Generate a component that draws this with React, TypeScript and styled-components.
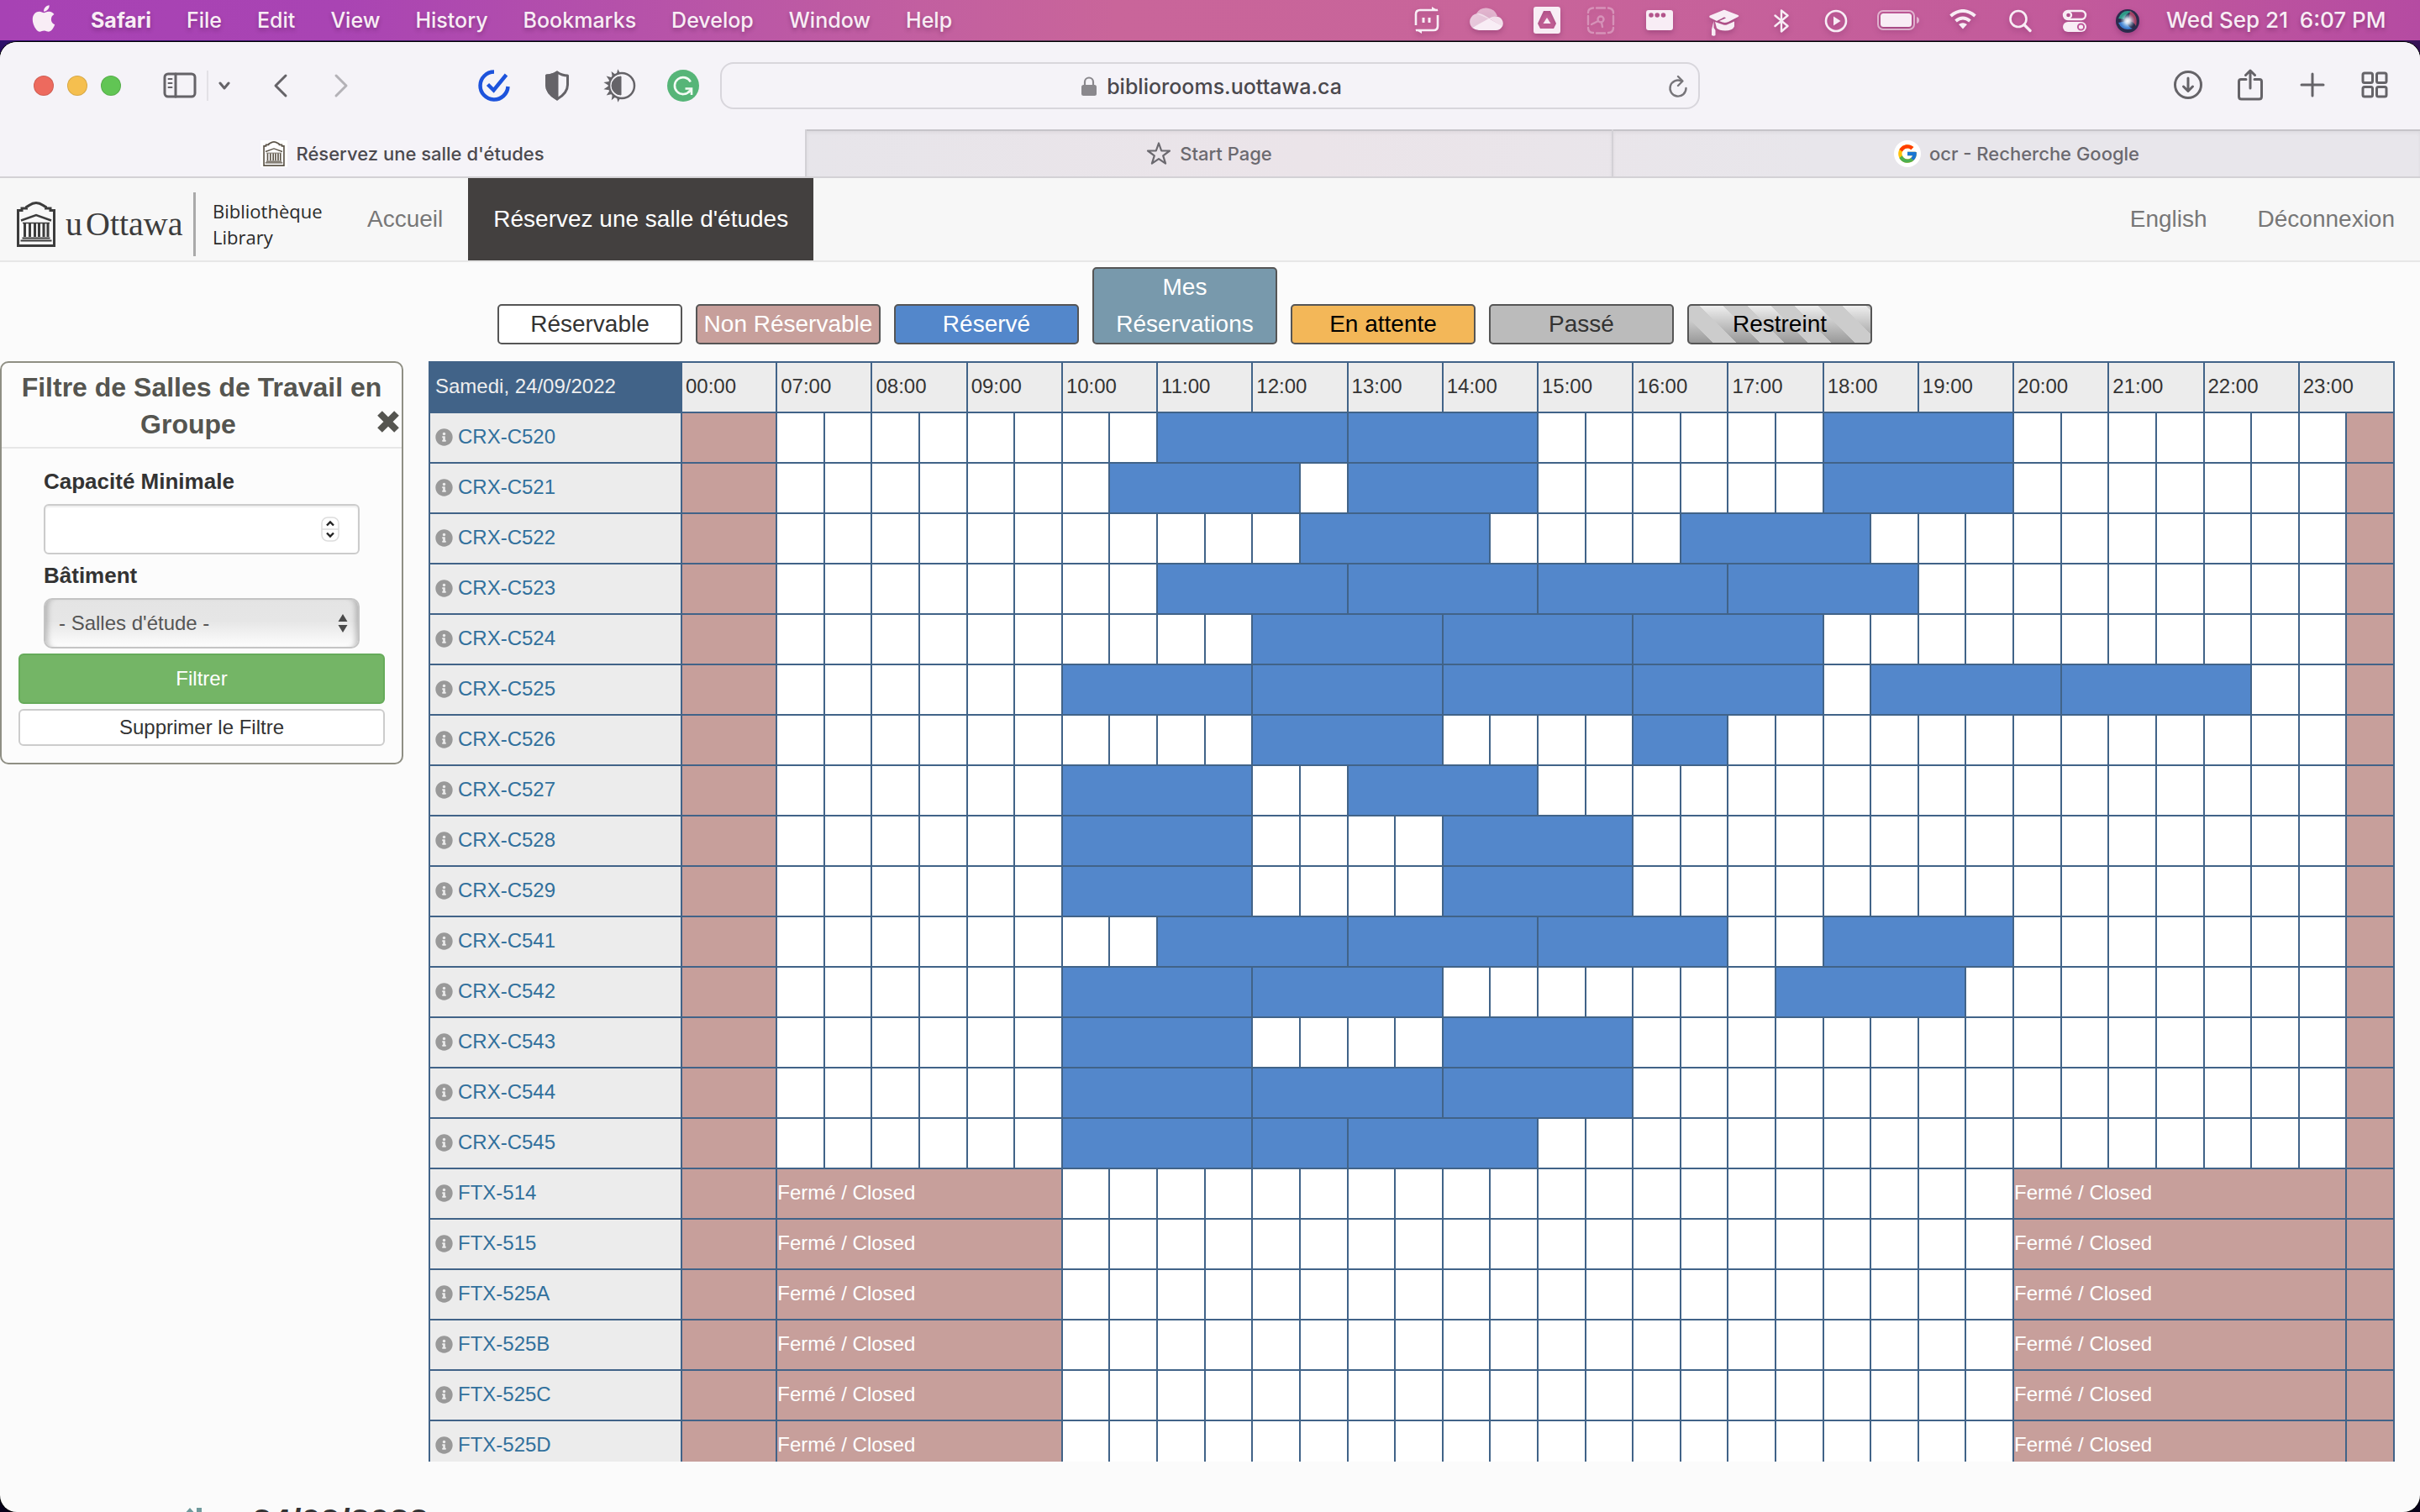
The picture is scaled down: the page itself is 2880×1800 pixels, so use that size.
import React from "react";
import styled, { createGlobalStyle, css } from "styled-components";
import { FaApple, FaInfoCircle } from "react-icons/fa";
import { FcGoogle } from "react-icons/fc";

const UI = `Inter, "Liberation Sans", sans-serif`;
const WEB = `"Liberation Sans", Arial, sans-serif`;
const LINE = "#416388";
const PINK = "#c79f9b";
const BLUE = "#5387cb";

const Global = createGlobalStyle`
  *, *::before, *::after { box-sizing: border-box; }
  body { margin: 0; background: #0b0420; font-family: ${WEB}; color: #333; }
  button, input, select { font: inherit; color: inherit; margin: 0; }
  button { background: none; border: 0; padding: 0; }
  a { color: inherit; text-decoration: none; }
  svg { display: block; flex: none; }
`;

/* ---------- desktop ---------- */

const Desktop = styled.div`
  height: 100vh;
  display: flex;
  flex-direction: column;
  overflow: hidden;
  background:
    linear-gradient(to bottom, transparent 0, #07021a 120px),
    linear-gradient(to right, #4b1aa6, #8a5a78 45%, #8a4c7a 75%, #5a1f86);
`;

const MenuBar = styled.header`
  flex: none;
  height: 48px;
  padding: 0 38px;
  display: flex;
  align-items: center;
  justify-content: space-between;
  font: 500 25px/48px ${UI};
  color: #f8edf5;
  text-shadow: 0 3px 5px rgba(60, 0, 50, 0.3);
  background: linear-gradient(to right, #a742b4 0, #a944b3 14%, #c25fa0 38%, #c9659a 46%, #c8649a 64%, #c25a9b 86%, #b54ba2 100%);
`;

const Menus = styled.nav`
  display: flex;
  align-items: center;
  gap: 42px;
`;

const MenuItem = styled.button<{ $bold?: boolean }>`
  height: 48px;
  font-weight: ${(p) => (p.$bold ? 700 : 500)};
  text-shadow: inherit;
`;

const AppleMark = styled(FaApple)`
  width: 28px;
  height: 36px;
  margin-top: -4px;
`;

const Status = styled.div`
  display: flex;
  align-items: center;
  gap: 28px;
  svg { filter: drop-shadow(0 3px 3px rgba(60, 0, 50, 0.25)); }
`;

const Clock = styled.time`
  min-width: 264px;
  font-size: 26px;
  white-space: pre;
`;

/* ---------- browser chrome ---------- */

const Window = styled.div`
  flex: 1;
  min-height: 0;
  margin-top: 2px;
  display: flex;
  flex-direction: column;
  overflow: hidden;
  border-radius: 20px;
  background: #fbfbfb;
  box-shadow: 0 0 0 1px #000;
`;

const Toolbar = styled.div`
  flex: none;
  height: 104px;
  display: grid;
  grid-template-columns: 1fr 1166px 1fr;
  align-items: center;
  background: #f5f3f8;
  color: #656368;
  font-family: ${UI};
`;

const ToolSide = styled.div<{ $end?: boolean }>`
  display: flex;
  align-items: center;
  ${(p) =>
    p.$end
      ? css`justify-content: flex-end; gap: 34px; padding-right: 34px;`
      : css`justify-content: space-between; padding: 0 24px 0 40px;`}
`;

const Group = styled.div<{ $gap: number }>`
  display: flex;
  align-items: center;
  gap: ${(p) => p.$gap}px;
`;

const Light = styled.button<{ $c: string }>`
  width: 24px;
  height: 24px;
  border-radius: 50%;
  background: ${(p) => p.$c};
  border: 1px solid rgba(0, 0, 0, 0.12);
`;

const Rule = styled.span`
  width: 2px;
  height: 36px;
  background: #e3e1e6;
`;

const Address = styled.form`
  height: 56px;
  padding: 2px 12px 0 16px;
  display: grid;
  grid-template-columns: 1fr auto 1fr;
  align-items: center;
  border: 2px solid #d8d6dc;
  border-radius: 16px;
  color: #77757a;
`;

const Host = styled.label`
  grid-column: 2;
  display: flex;
  align-items: center;
  gap: 12px;
`;

const HostInput = styled.input`
  field-sizing: content;
  border: 0;
  padding: 0;
  outline: 0;
  background: none;
  font: 500 25px/40px ${UI};
  color: #4a484d;
`;

const Reload = styled.button`
  justify-self: end;
`;

const Tabs = styled.div`
  flex: none;
  height: 58px;
  display: grid;
  grid-template-columns: repeat(3, 1fr);
  border-bottom: 2px solid #d3d1d5;
  background: linear-gradient(to right, #e7e5ea 33%, #ebe4e9 54%, #e8e6eb 75%);
`;

const Tab = styled.button<{ $active?: boolean }>`
  padding-top: 2px;
  display: flex;
  align-items: center;
  justify-content: center;
  gap: 10px;
  font: 500 22px/32px ${UI};
  color: ${(p) => (p.$active ? "#4c4a4f" : "#6b696f")};
  border-right: 2px solid #d3d1d6;
  ${(p) =>
    p.$active
      ? css`background: #f5f3f8;`
      : css`box-shadow: inset 0 2px 0 #c6c4c9, inset 0 4px 4px rgba(0, 0, 0, 0.05);`}
  &:last-child { border-right: 0; }
`;

const Favicon = styled.span<{ $round?: boolean }>`
  width: 32px;
  height: 32px;
  display: grid;
  place-items: center;
  background: #fff;
  color: #5e564a;
  border-radius: ${(p) => (p.$round ? "50%" : "0")};
`;

/* ---------- site navigation ---------- */

const SiteNav = styled.nav`
  flex: none;
  height: 100px;
  display: flex;
  background: #f7f7f7;
  border-bottom: 2px solid #e7e7e7;
  font-size: 28px;
  line-height: 40px;
  color: #777;
`;

const Brand = styled.a`
  display: flex;
  align-items: center;
  padding: 12px 20px 0 20px;
  color: #3c3c3c;
`;

const Wordmark = styled.span`
  display: flex;
  gap: 4px;
  width: 152px;
  padding-left: 12px;
  font: 40px/52px "Liberation Serif", serif;
`;

const BrandRule = styled.span`
  width: 3px;
  height: 76px;
  margin: 0 20px 0 12px;
  background: #aaa;
`;

const Unit = styled.span`
  width: 134px;
  font: 500 22px/31px "Open Sans", sans-serif;
  color: #2a2a2a;
`;

const NavLink = styled.a<{ $on?: boolean }>`
  display: flex;
  align-items: center;
  padding: 0 30px;
  ${(p) => p.$on && css`background: #43403f; color: #fff;`}
`;

const Spacer = styled.span`
  flex: 1;
`;

/* ---------- legend ---------- */

const Legend = styled.ul`
  flex: none;
  list-style: none;
  margin: 0;
  padding: 6px 60px 20px 0;
  display: flex;
  justify-content: center;
  align-items: flex-end;
  gap: 16px;
`;

const Key = styled.li<{ $bg: string; $fg: string }>`
  width: 220px;
  padding: 0 6px;
  text-align: center;
  font-size: 28px;
  line-height: 44px;
  border: 2px solid #555;
  border-radius: 5px;
  white-space: pre-line;
  background: ${(p) => p.$bg};
  color: ${(p) => p.$fg};
`;

/* ---------- body ---------- */

const Body = styled.main`
  flex: 1;
  min-height: 0;
  display: flex;
  align-items: flex-start;
  gap: 30px;
  padding-right: 30px;
`;

const Panel = styled.form`
  flex: none;
  width: 480px;
  border: 2px solid #8f8f84;
  border-radius: 10px;
  background: #fcfcfc;
  padding-bottom: 20px;
`;

const PanelTitle = styled.div`
  padding: 7px 2px 5px;
  border-bottom: 2px solid #e7e7e7;
  display: grid;
  grid-template-columns: 1fr 28px;
`;

const Title = styled.h2`
  grid-area: 1 / 1 / 2 / 3;
  margin: 0;
  text-align: center;
  font: bold 32px/44px ${WEB};
  color: #555550;
`;

const TitleTail = styled.span`
  display: block;
  padding-right: 32px;
`;

const Close = styled.button`
  grid-area: 1 / 2 / 2 / 3;
  align-self: end;
  height: 50px;
  color: #555550;
`;

const Fields = styled.div`
  padding: 20px 50px 0;
`;

const Label = styled.label`
  display: block;
  font: bold 26px/38px ${WEB};
  padding: 0 0 8px;
  div + & { padding-top: 6px; }
`;

const Field = styled.div`
  position: relative;
`;

const control = css`
  display: block;
  width: 100%;
  height: 60px;
  border: 2px solid #ccc;
  font: 24px/40px ${WEB};
  outline: 0;
`;

const NumberInput = styled.input`
  ${control}
  border-radius: 6px;
  padding: 0 50px 0 16px;
  background: #fff;
  box-shadow: inset 0 2px 2px rgba(0, 0, 0, 0.07);
  appearance: textfield;
`;

const Select = styled.select`
  ${control}
  border-color: #c4c4c4;
  border-radius: 10px;
  padding: 0 16px;
  color: #555;
  appearance: none;
  background: linear-gradient(to bottom, #e4e4e4, #e6e6e6 45%, #fdfdfd);
  box-shadow: inset 8px 0 6px -5px rgba(0, 0, 0, 0.22), inset -8px 0 6px -5px rgba(0, 0, 0, 0.22);
`;

const Arrows = styled.span<{ $right: number }>`
  position: absolute;
  right: ${(p) => p.$right}px;
  top: 0;
  bottom: 0;
  display: flex;
  align-items: center;
  pointer-events: none;
`;

const Actions = styled.div`
  display: flex;
  flex-direction: column;
  gap: 6px;
  padding: 6px 20px 0;
  font-size: 24px;
`;

const Submit = styled.button`
  height: 60px;
  border: 2px solid #66ab5a;
  border-radius: 6px;
  background: #74b566;
  color: #fff;
`;

const Reset = styled.button`
  height: 44px;
  border: 2px solid #ccc;
  border-radius: 6px;
  background: #fff;
`;

const TableClip = styled.div`
  flex: 1;
  min-width: 0;
  align-self: stretch;
  overflow: hidden;
`;

const Table = styled.table`
  width: 100%;
  table-layout: fixed;
  border-collapse: collapse;
  font-size: 24px;
  line-height: 32px;
  th, td {
    height: 60px;
    border: 2px solid ${LINE};
    font-weight: 400;
    text-align: left;
    white-space: nowrap;
  }
`;

const RoomCol = styled.col`
  width: 300px;
`;

const DateHead = styled.th`
  padding: 0 6px 2px;
  background: ${LINE};
  color: #eee;
`;

const HourHead = styled.th`
  padding: 0 4px 2px;
  background: #ececec;
`;

const RoomCell = styled.th`
  padding: 0 6px 2px;
  background: #ececec;
`;

const RoomLink = styled.a`
  display: flex;
  align-items: center;
  gap: 6px;
  color: #31709c;
`;

const Info = styled(FaInfoCircle)`
  width: 21px;
  height: 21px;
  color: #999;
`;

const Slot = styled.td<{ $kind: Kind }>`
  padding: 0 0 2px;
  color: #fff;
  background: ${(p) => ({ free: "#fff", closed: PINK, booked: BLUE })[p.$kind]};
`;

const NextDay = styled.section`
  flex: none;
  height: 60px;
  padding: 51px 0 0 218px;
  display: flex;
  align-items: flex-start;
  gap: 58px;
  overflow: hidden;
`;

const NextTitle = styled.h3`
  margin: 0;
  font: bold 42px/42px ${WEB};
`;

/* ---------- icons ---------- */

type IconProps = { w: number; h: number; children: React.ReactNode; sw?: number };
const Icon = ({ w, h, children, sw = 3 }: IconProps) => (
  <svg width={w} height={h} viewBox={`0 0 ${w} ${h}`} fill="none" stroke="currentColor" strokeWidth={sw} strokeLinecap="round" strokeLinejoin="round" aria-hidden="true">
    {children}
  </svg>
);

const Building = ({ w, h }: { w: number; h: number }) => (
  <svg width={w} height={h} viewBox="0 0 46 54" fill="none" stroke="currentColor" strokeWidth="3" aria-hidden="true">
    <path d="M1.500 52.500V10.500H6V8h5.500V6.500C15 5 17 1.500 23 1.500S31 5 34.500 6.500V8H40v2.500h4.500v42z" />
    <path d="M5 22.500 23 16l18 6.500" strokeWidth="2.400" />
    <path d="M7 25.500h32" strokeWidth="1.500" />
    <path d="M9.500 26v16M15.500 26v16M21.500 26v16M26.500 26v16M32 26v16M37 26v16" strokeWidth="3" />
    <path d="M6.500 43.500h33M4.500 46.500h37" strokeWidth="2" />
  </svg>
);

const StatusIcons = () => (
  <>
    <Icon w={34} h={48} sw={2.6}>
      <path d="M5 30V17q0-5 5-5h21M31 18v13q0 5-5 5H5" strokeLinecap="butt" />
      <path d="M24 8l8 5h-8zM12 40l-8-5h8z" fill="currentColor" stroke="none" />
      <path d="M14 21v6M21 21v6" strokeWidth="3" strokeLinecap="butt" />
    </Icon>
    <Icon w={54} h={48}>
      <g fill="currentColor" stroke="none">
        <path d="M15 16a14 14 0 0 1 25 3q-6 1-9 4L15 16z" opacity=".6" />
        <path d="M8 30a10 10 0 0 1 10-14q4 0 14 7L10 33z" opacity=".75" />
        <path d="M10 33q4 3 8 3h20a8.500 8.500 0 0 0 8-5L30 22z" />
        <path d="M30 22q4-3 9-2.500a8.500 8.500 0 0 1 7 12z" opacity=".9" />
      </g>
    </Icon>
    <Icon w={34} h={48}>
      <path fillRule="evenodd" fill="currentColor" stroke="none" d="M4 8h26q3 0 3 3v26q0 3-3 3H4q-3 0-3-3V11q0-3 3-3zM13 13 6 28l3 6h16l3-6-7-15z" />
      <path d="M17 21l-4.500 7h9z" fill="currentColor" stroke="none" />
    </Icon>
    <Icon w={40} h={48} sw={2.4}>
      <g opacity=".35">
        <path d="M14 9.500h10M4 15q0-5 6-5.500M28 9.500q6 .5 6 6M4 33q0 6 6 6M34 33q0 6-6 6M4 19v10M34 19v10M14 39.500h10" />
        <circle cx="19" cy="23" r="3.500" />
        <path d="M16 25l-8 4M20 27l1 5" />
      </g>
    </Icon>
    <Icon w={50} h={48}>
      <path fillRule="evenodd" fill="currentColor" stroke="none" d="M8 12h26q3 0 3 3v18q0 3-3 3H8q-3 0-3-3V15q0-3 3-3zM11 15.200a2.800 2.800 0 1 0 0 5.600 2.800 2.800 0 0 0 0-5.600zM18.200 15.200a2.800 2.800 0 1 0 0 5.600 2.800 2.800 0 0 0 0-5.600zM25.500 15.200a2.800 2.800 0 1 0 0 5.600 2.800 2.800 0 0 0 0-5.600z" />
    </Icon>
    <Icon w={40} h={48}>
      <g fill="currentColor" stroke="none">
        <path d="M19 12q1-.5 2 0l15.500 6q1.500 1 0 2L25 26q-4 1.500-7 .5l-4-1.500 8-3.500q-2-2-4 0L11 25l-8-4q-1.500-1.500 0-2.500z" />
        <path d="M9 26l10 3.500q2 .5 4 0l9-4v6q-2 5-11 5-7 0-10-3z" />
        <path d="M7.500 25v8l2 3v6q-2 1.500-4.500 0V35z" />
      </g>
    </Icon>
    <Icon w={40} h={48} sw={2.4}>
      <path d="M12.500 18.500 27.500 31 20 37.500V12.500L27.500 18.500 12.500 31" />
    </Icon>
    <Icon w={34} h={48} sw={2.600}>
      <circle cx="17" cy="25" r="12" />
      <path d="M14 19.500v11l8.500-5.500z" fill="currentColor" stroke="none" />
    </Icon>
    <Icon w={58} h={48} sw={2}>
      <rect x="5" y="13" width="43" height="22" rx="6" opacity=".6" />
      <rect x="8" y="16" width="37" height="16" rx="3.500" fill="currentColor" stroke="none" />
      <path d="M51 20q3 1 3 4t-3 4z" fill="currentColor" stroke="none" opacity=".6" />
    </Icon>
    <Icon w={40} h={48} sw={4}>
      <path d="M5.500 19q14.500-12 29 0M11.500 25q8.500-7 17 0" strokeLinecap="butt" />
      <path d="M20 34.500 15 29q5-3.500 10 0z" fill="currentColor" stroke="none" />
    </Icon>
    <Icon w={40} h={48} sw={2.600}>
      <circle cx="18" cy="22.500" r="9.500" />
      <path d="M25 29.500 32 36.500" strokeWidth="3.400" />
    </Icon>
    <Icon w={34} h={48} sw={2.400}>
      <rect x="4" y="13" width="26" height="10" rx="5" />
      <circle cx="9.500" cy="18" r="3.500" />
      <rect x="3" y="26" width="28" height="12" rx="6" fill="currentColor" stroke="none" />
      <circle cx="24.500" cy="32" r="3.600" stroke="#c0589b" strokeWidth="2" />
    </Icon>
    <svg width="36" height="48" viewBox="0 0 36 48" aria-hidden="true">
      <defs>
        <radialGradient id="siri">
          <stop offset="0" stopColor="#fff" />
          <stop offset=".35" stopColor="#e6f2fb" stopOpacity=".85" />
          <stop offset="1" stopColor="#9fd0ee" stopOpacity="0" />
        </radialGradient>
      </defs>
      <circle cx="18" cy="25" r="14" fill="#2b2b4c" />
      <path d="M7 22q5-12 16-8-8 2-9 9z" fill="#2fae93" opacity=".85" />
      <path d="M21 13q10 5 7 18-3-6-9-6z" fill="#c24a6c" opacity=".8" />
      <path d="M7 27q5 11 17 7-6-2-7-9z" fill="#3f8de8" opacity=".85" />
      <circle cx="18" cy="25" r="9" fill="url(#siri)" />
    </svg>
  </>
);

const sunRays = Array.from({ length: 8 }, (_, i) => {
  const a = ((98 + i * 23.500) * Math.PI) / 180;
  const at = (r: number, d: number) => `${20 + r * Math.cos(a + d)} ${20 - r * Math.sin(a + d)}`;
  return `M${at(14, -0.17)}L${at(20, 0)}L${at(14, 0.17)}z`;
}).join("");

/* ---------- schedule data ---------- */

type Kind = "free" | "closed" | "booked";
type Span = [from: number, to: number];
const OPEN = 7;
const LAST = 23.5;

const bookings: Record<string, Span[]> = {
  "CRX-C520": [[11, 13], [13, 15], [18, 20]],
  "CRX-C521": [[10.5, 12.5], [13, 15], [18, 20]],
  "CRX-C522": [[12.5, 14.5], [16.5, 18.5]],
  "CRX-C523": [[11, 13], [13, 15], [15, 17], [17, 19]],
  "CRX-C524": [[12, 14], [14, 16], [16, 18]],
  "CRX-C525": [[10, 12], [12, 14], [14, 16], [16, 18], [18.5, 20.5], [20.5, 22.5]],
  "CRX-C526": [[12, 14], [16, 17]],
  "CRX-C527": [[10, 12], [13, 15]],
  "CRX-C528": [[10, 12], [14, 16]],
  "CRX-C529": [[10, 12], [14, 16]],
  "CRX-C541": [[11, 13], [13, 15], [15, 17], [18, 20]],
  "CRX-C542": [[10, 12], [12, 14], [17.5, 19.5]],
  "CRX-C543": [[10, 12], [14, 16]],
  "CRX-C544": [[10, 12], [12, 14], [14, 16]],
  "CRX-C545": [[10, 12], [12, 13], [13, 15]],
};
const closedRooms = ["FTX-514", "FTX-515", "FTX-525A", "FTX-525B", "FTX-525C", "FTX-525D"];
const closedSpans: Span[] = [[7, 10], [20, 23.5]];
const hours = [0, ...Array.from({ length: 17 }, (_, i) => OPEN + i)];

const Row = ({ room, spans, kind }: { room: string; spans: Span[]; kind: Kind }) => {
  const cells: React.ReactNode[] = [];
  for (let t = OPEN; t < LAST; ) {
    const span = spans.find(([from]) => from === t);
    const end = span ? span[1] : t + 0.5;
    cells.push(
      <Slot key={t} colSpan={(end - t) * 2} $kind={span ? kind : "free"}>
        {span && kind === "closed" ? "Fermé / Closed" : null}
      </Slot>
    );
    t = end;
  }
  return (
    <tr>
      <RoomCell scope="row">
        <RoomLink href="#">
          <Info />
          {room}
        </RoomLink>
      </RoomCell>
      <Slot colSpan={2} $kind="closed" />
      {cells}
      <Slot $kind="closed" />
    </tr>
  );
};

const legend = [
  { text: "Réservable", bg: "#fff", fg: "#333" },
  { text: "Non Réservable", bg: PINK, fg: "#fff" },
  { text: "Réservé", bg: BLUE, fg: "#fff" },
  { text: "Mes\nRéservations", bg: "#7899ac", fg: "#fff" },
  { text: "En attente", bg: "#f3b758", fg: "#000" },
  { text: "Passé", bg: "#bbb", fg: "#333" },
  {
    text: "Restreint",
    bg: "repeating-linear-gradient(45deg, transparent 0 20px, #ccc 20px 40px), linear-gradient(to bottom, #eee, #999)",
    fg: "#000",
  },
];

export default function App() {
  return (
    <Desktop>
      <Global />
      <MenuBar>
        <Menus>
          <AppleMark aria-hidden="true" />
          <MenuItem $bold>Safari</MenuItem>
          {["File", "Edit", "View", "History", "Bookmarks", "Develop", "Window", "Help"].map((m) => (
            <MenuItem key={m}>{m}</MenuItem>
          ))}
        </Menus>
        <Status>
          <StatusIcons />
          <Clock>{"Wed Sep 21  6:07 PM"}</Clock>
        </Status>
      </MenuBar>

      <Window>
        <Toolbar>
          <ToolSide>
            <Group $gap={50}>
              <Group $gap={16}>
                <Light $c="#ed6a5e" aria-label="Close" />
                <Light $c="#f5bf4f" aria-label="Minimize" />
                <Light $c="#61c554" aria-label="Zoom" />
              </Group>
              <Group $gap={12}>
                <button aria-label="Sidebar">
                  <Icon w={40} h={32}>
                    <rect x="2" y="2" width="36" height="27" rx="4" />
                    <path d="M15 2v27" />
                    <path d="M6.500 8h4M6.500 13h4M6.500 18h4" strokeWidth="2" />
                  </Icon>
                </button>
                <Rule />
                <button aria-label="Tab groups">
                  <Icon w={14} h={12}><path d="M2 3l5 6 5-6" /></Icon>
                </button>
              </Group>
              <Group $gap={52}>
                <button aria-label="Back">
                  <Icon w={20} h={30}><path d="M16 3 4 15l12 12" /></Icon>
                </button>
                <button aria-label="Forward">
                  <Icon w={20} h={30}><path d="M4 3l12 12L4 27" opacity=".45" /></Icon>
                </button>
              </Group>
            </Group>
            <Group $gap={35}>
              <button aria-label="Tasks">
                <svg width="40" height="40" viewBox="0 0 40 40" fill="none" stroke="#1d53dc" strokeWidth="4.500">
                  <path d="M20 3.500A16.500 16.500 0 1 0 36.500 21" />
                  <path d="M12.500 18.500l7 7L34.500 7" />
                </svg>
              </button>
              <button aria-label="Privacy">
                <Icon w={40} h={40}>
                  <path d="M20 4q6 4 12.500 4v11q0 10-12.500 17Q7.500 29 7.500 19V8Q14 8 20 4z" />
                  <path d="M20 4v32Q7.500 29 7.500 19V8Q14 8 20 4z" fill="currentColor" />
                </Icon>
              </button>
              <button aria-label="Dark mode">
                <svg width="40" height="40" viewBox="0 0 40 40">
                  <path d={sunRays} fill="#656368" />
                  <circle cx="22" cy="20" r="15" fill="#f5f3f8" stroke="#656368" strokeWidth="2.500" />
                  <path d="M21 9a11 11 0 0 0 0 22z" fill="#656368" stroke="#656368" />
                </svg>
              </button>
              <button aria-label="Grammar">
                <svg width="40" height="40" viewBox="0 0 40 40" fill="none" stroke="#f3fbf5" strokeWidth="2.600">
                  <circle cx="20" cy="20" r="19" fill="#56b578" stroke="none" />
                  <path d="M28.800 15.500A10 10 0 1 0 28 26" />
                  <path d="M22.500 23.500H30v7.500M30 24l-4 4.500" strokeWidth="2.600" />
                </svg>
              </button>
            </Group>
          </ToolSide>
          <Address>
            <Host>
              <svg width="18" height="24" viewBox="0 0 18 24" role="img" aria-label="Secure">
                <rect x="0" y="10" width="18" height="13" rx="2.500" fill="#8a888d" />
                <path d="M4 11V6.500a5 5 0 0 1 10 0V11" fill="none" stroke="#8a888d" strokeWidth="2.200" />
              </svg>
              <HostInput type="text" defaultValue="bibliorooms.uottawa.ca" aria-label="Address" />
            </Host>
            <Reload type="button" aria-label="Reload">
              <Icon w={24} h={30} sw={2.400}>
                <path d="M16 8.500A9.500 9.500 0 1 0 21.500 17" />
                <path d="M12 3l5.500 5.500L12 14" />
              </Icon>
            </Reload>
          </Address>
          <ToolSide $end>
            <button aria-label="Downloads">
              <Icon w={40} h={40}><circle cx="20" cy="19" r="15.500" /><path d="M20 11v15M14.500 21l5.500 5.500 5.500-5.500" /></Icon>
            </button>
            <button aria-label="Share">
              <Icon w={40} h={40}><path d="M15 12.500H9q-2.500 0-2.500 2.500v18q0 3 3 3h21q3 0 3-3V15q0-2.500-2.500-2.500h-6M20 23V2M14.500 7.500 20 2l5.500 5.500" /></Icon>
            </button>
            <button aria-label="New tab">
              <Icon w={40} h={40}><path d="M20 6v26M7 19h26" /></Icon>
            </button>
            <button aria-label="Tab overview">
              <Icon w={40} h={40}>
                <rect x="6" y="5" width="11.500" height="11.500" rx="2" /><rect x="22.500" y="5" width="11.500" height="11.500" rx="2" />
                <rect x="6" y="21.500" width="11.500" height="11.500" rx="2" /><rect x="22.500" y="21.500" width="11.500" height="11.500" rx="2" />
              </Icon>
            </button>
          </ToolSide>
        </Toolbar>
        <Tabs>
          <Tab $active>
            <Favicon><Building w={26} h={30} /></Favicon>
            Réservez une salle d'études
          </Tab>
          <Tab>
            <Icon w={30} h={30} sw={2.200}><path d="M15 2.500l3.200 9H28l-7.800 5.900 2.900 9.300L15 21.100l-8.100 5.600 2.900-9.300L2 11.500h9.800z" /></Icon>
            Start Page
          </Tab>
          <Tab>
            <Favicon $round><FcGoogle size={26} /></Favicon>
            ocr - Recherche Google
          </Tab>
        </Tabs>

        <SiteNav>
          <Brand href="#">
            <Building w={46} h={54} />
            <Wordmark><span>u</span><span>Ottawa</span></Wordmark>
            <BrandRule />
            <Unit>Bibliothèque<br />Library</Unit>
          </Brand>
          <NavLink href="#">Accueil</NavLink>
          <NavLink href="#" $on>Réservez une salle d'études</NavLink>
          <Spacer />
          <NavLink href="#">English</NavLink>
          <NavLink href="#">Déconnexion</NavLink>
        </SiteNav>

        <Legend>
          {legend.map((k) => (
            <Key key={k.text} $bg={k.bg} $fg={k.fg}>{k.text}</Key>
          ))}
        </Legend>

        <Body>
          <Panel>
            <PanelTitle>
              <Title>Filtre de Salles de Travail en <TitleTail>Groupe</TitleTail></Title>
              <Close type="button" aria-label="Fermer">
                <svg width="28" height="28" viewBox="0 0 28 28" fill="none" stroke="currentColor" strokeWidth="8"><path d="M4 4l20 20M24 4 4 24" /></svg>
              </Close>
            </PanelTitle>
            <Fields>
              <Label htmlFor="capacity">Capacité Minimale</Label>
              <Field>
                <NumberInput id="capacity" type="number" />
                <Arrows $right={24}>
                  <svg width="22" height="30" viewBox="0 0 22 30" fill="none" stroke="#222" strokeWidth="2.400">
                    <rect x="1" y="1" width="20" height="28" rx="7" fill="#fff" stroke="#ddd" strokeWidth="1.500" />
                    <path d="M1 15h20" stroke="#ddd" strokeWidth="1.500" />
                    <path d="M7 10.500l4-4 4 4M7 19.500l4 4 4-4" />
                  </svg>
                </Arrows>
              </Field>
              <Label htmlFor="building">Bâtiment</Label>
              <Field>
                <Select id="building"><option>- Salles d'étude -</option></Select>
                <Arrows $right={14}>
                  <svg width="12" height="24" viewBox="0 0 12 24" fill="#4a4a4a"><path d="M6 1l5.500 9H.5zM6 23l5.500-9H.5z" /></svg>
                </Arrows>
              </Field>
            </Fields>
            <Actions>
              <Submit type="button">Filtrer</Submit>
              <Reset type="button">Supprimer le Filtre</Reset>
            </Actions>
          </Panel>

          <TableClip>
            <Table>
              <colgroup>
                <RoomCol />
                {Array.from({ length: 36 }, (_, i) => <col key={i} />)}
              </colgroup>
              <thead>
                <tr>
                  <DateHead scope="col">Samedi, 24/09/2022</DateHead>
                  {hours.map((h) => (
                    <HourHead key={h} scope="col" colSpan={2}>{String(h).padStart(2, "0")}:00</HourHead>
                  ))}
                </tr>
              </thead>
              <tbody>
                {Object.entries(bookings).map(([room, spans]) => (
                  <Row key={room} room={room} spans={spans} kind="booked" />
                ))}
                {closedRooms.map((room) => (
                  <Row key={room} room={room} spans={closedSpans} kind="closed" />
                ))}
              </tbody>
            </Table>
          </TableClip>
        </Body>

        <NextDay>
          <svg width="24" height="24" viewBox="0 0 24 24" fill="#6f9a9c"><path d="M0 13 8 4l8 9zM16 4h6v12h-6z" /></svg>
          <NextTitle>24/09/2022</NextTitle>
        </NextDay>
      </Window>
    </Desktop>
  );
}
